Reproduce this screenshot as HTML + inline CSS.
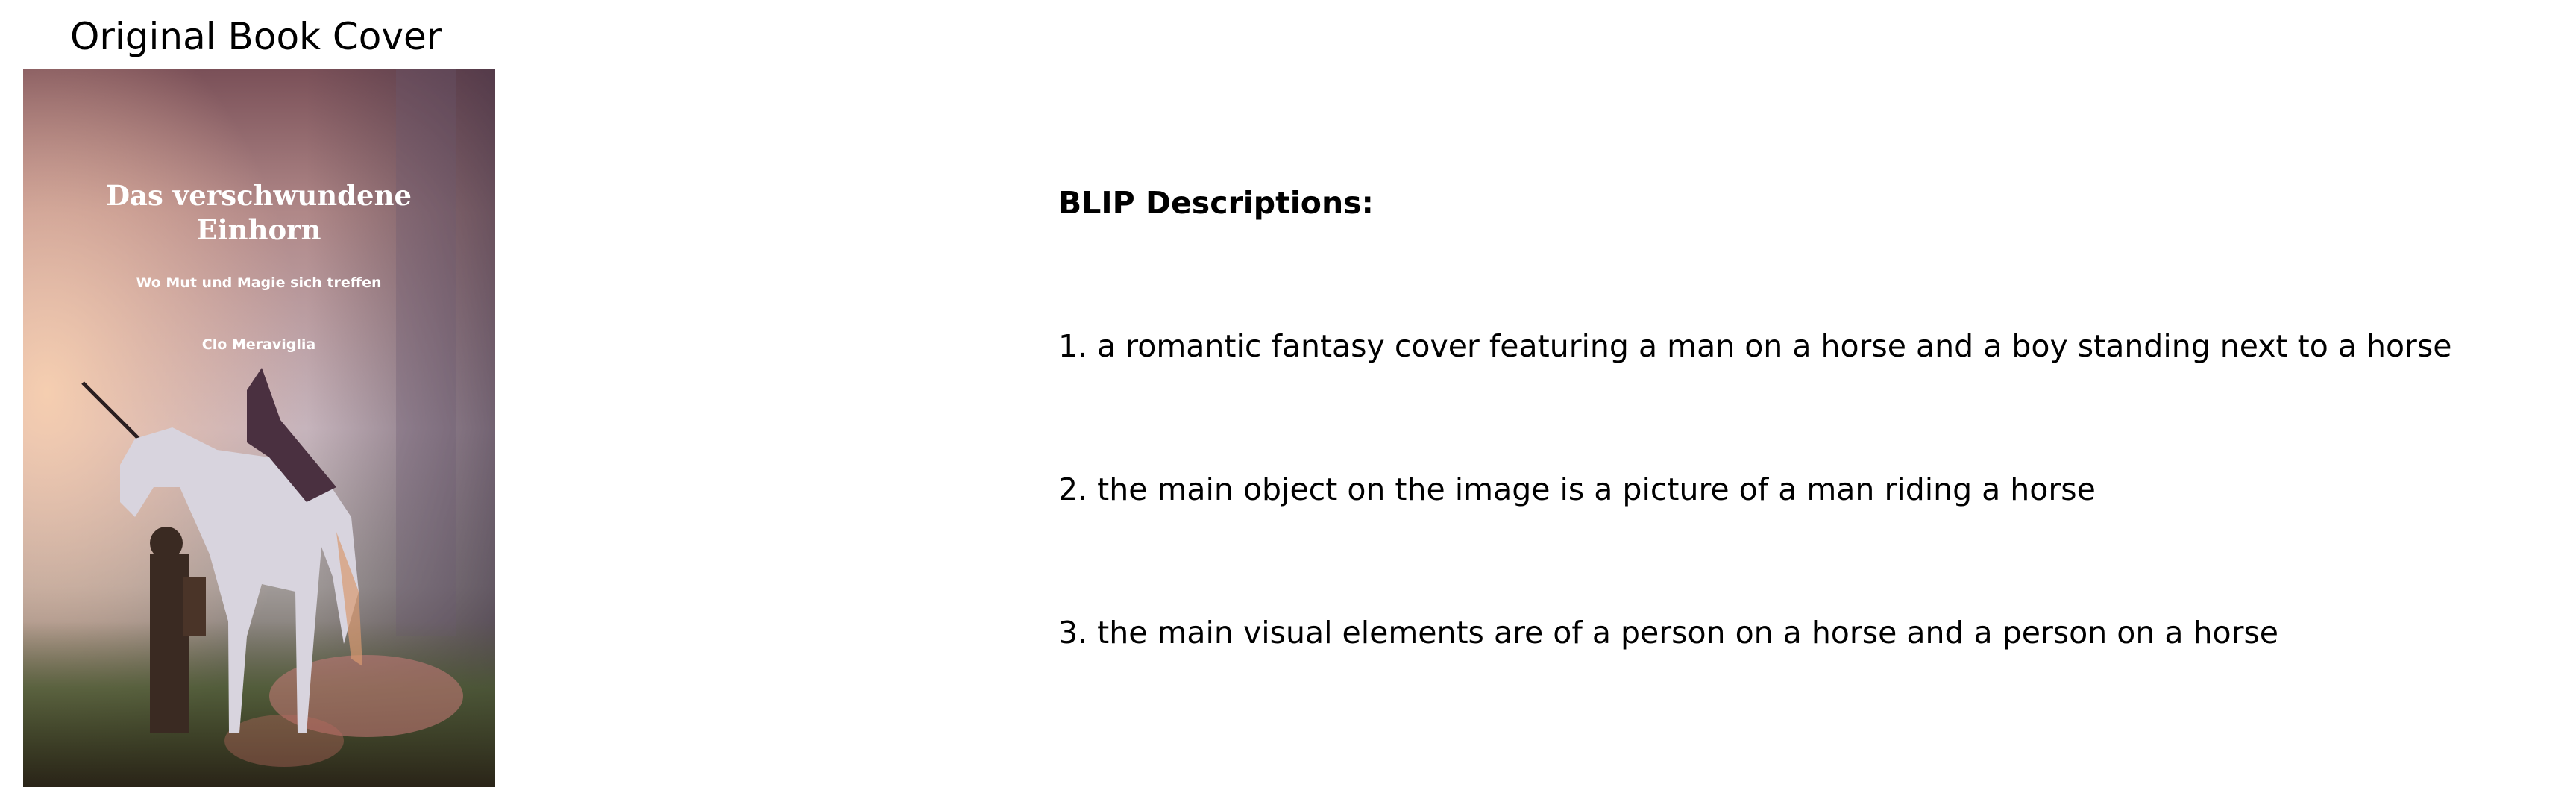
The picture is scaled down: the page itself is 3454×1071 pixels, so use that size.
<!DOCTYPE html>
<html><head><meta charset="utf-8"><style>
html,body{margin:0;padding:0;background:#fff;}
body{width:3454px;height:1071px;position:relative;overflow:hidden;font-family:"DejaVu Sans","Liberation Sans",sans-serif;color:#000;}
.t{position:absolute;white-space:nowrap;line-height:1;}
</style></head><body>
<div class="t" style="left:94px;top:24px;font-size:50px;">Original Book Cover</div>
<svg style="position:absolute;left:31px;top:93px" width="633" height="962" viewBox="0 0 633 962" preserveAspectRatio="none">
<defs>
<linearGradient id="bg" x1="0" y1="0" x2="0" y2="1">
<stop offset="0" stop-color="#7a5058"/><stop offset="0.2" stop-color="#b08888"/><stop offset="0.5" stop-color="#c6b4bc"/><stop offset="0.72" stop-color="#a09a98"/><stop offset="1" stop-color="#3a3222"/></linearGradient>
<radialGradient id="gl" cx="0.05" cy="0.45" r="0.55"><stop offset="0" stop-color="#f8d0b0" stop-opacity="0.95"/><stop offset="1" stop-color="#f0b8a0" stop-opacity="0"/></radialGradient>
<linearGradient id="rt" x1="0" y1="0" x2="1" y2="0"><stop offset="0.6" stop-color="#403040" stop-opacity="0"/><stop offset="1" stop-color="#3a2c40" stop-opacity="0.6"/></linearGradient>
<linearGradient id="gr" x1="0" y1="0" x2="0" y2="1"><stop offset="0" stop-color="#5a6040" stop-opacity="0"/><stop offset="0.4" stop-color="#4a5a30" stop-opacity="0.75"/><stop offset="1" stop-color="#2a2418"/></linearGradient>
</defs>
<rect width="633" height="962" fill="url(#bg)"/>
<rect width="633" height="962" fill="url(#gl)"/>
<rect width="633" height="962" fill="url(#rt)"/>
<rect x="500" y="0" width="80" height="760" fill="#6a5a70" opacity="0.3"/>
<rect x="0" y="740" width="633" height="222" fill="url(#gr)"/>
<ellipse cx="460" cy="840" rx="130" ry="55" fill="#c87a78" opacity="0.55"/>
<ellipse cx="350" cy="900" rx="80" ry="35" fill="#b86a60" opacity="0.4"/>
<path d="M80 420 L160 500" stroke="#2a1e20" stroke-width="5"/>
<path d="M130 530 L150 495 L200 480 L260 510 L330 520 L400 540 L440 600 L450 700 L430 770 L415 680 L400 640 L390 760 L380 890 L368 890 L365 700 L320 690 L300 760 L290 890 L276 890 L275 740 L250 650 L210 560 L175 560 L150 600 L130 580 Z" fill="#d8d4de"/>
<path d="M420 620 L450 700 L455 800 L440 790 Z" fill="#d89a70" opacity="0.7"/>
<path d="M300 430 L320 400 L345 470 L420 560 L380 580 L330 520 L300 500 Z" fill="#4a3040"/>
<rect x="170" y="650" width="52" height="240" fill="#3a2a22"/>
<circle cx="192" cy="635" r="22" fill="#3a2a22"/>
<rect x="215" y="680" width="30" height="80" fill="#4a3428"/>
<text x="316" y="182" text-anchor="middle" font-family="DejaVu Serif,serif" font-weight="bold" font-size="37" fill="#fff">Das verschwundene</text>
<text x="316" y="228" text-anchor="middle" font-family="DejaVu Serif,serif" font-weight="bold" font-size="37" fill="#fff">Einhorn</text>
<text x="316" y="292" text-anchor="middle" font-size="19" fill="#fff" font-weight="bold">Wo Mut und Magie sich treffen</text>
<text x="316" y="375" text-anchor="middle" font-size="19" fill="#fff" font-weight="bold">Clo Meraviglia</text>
</svg>
<div class="t" style="left:1419px;top:252px;font-size:41px;font-weight:bold;">BLIP Descriptions:</div>
<div class="t" style="left:1419px;top:444px;font-size:41px;">1. a romantic fantasy cover featuring a man on a horse and a boy standing next to a horse</div>
<div class="t" style="left:1419px;top:636px;font-size:41px;">2. the main object on the image is a picture of a man riding a horse</div>
<div class="t" style="left:1419px;top:828px;font-size:41px;">3. the main visual elements are of a person on a horse and a person on a horse</div>
</body></html>
